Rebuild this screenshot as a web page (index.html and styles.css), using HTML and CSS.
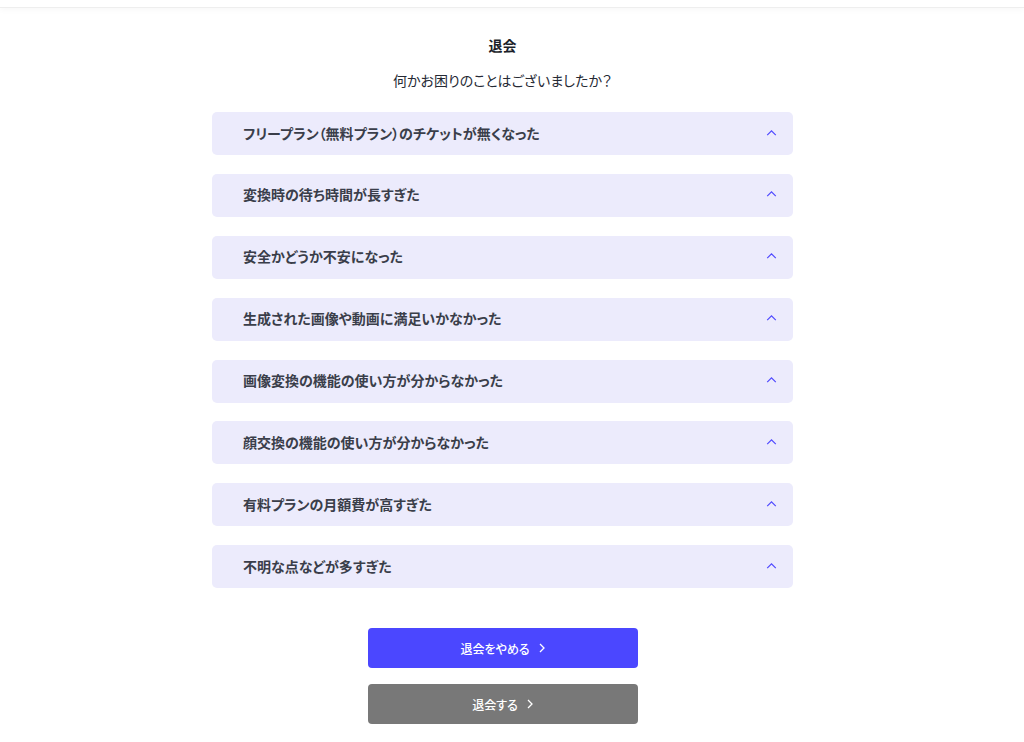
FILE: index.html
```html
<!DOCTYPE html>
<html lang="ja">
<head>
<meta charset="utf-8">
<title>退会</title>
<link rel="stylesheet" href="styles.css">
</head>
<body>
<header class="topbar"></header>
<main class="page">
  <h1 class="title">退会</h1>
  <p class="lead">何かお困りのことはございましたか？</p>
  <ul class="reasons">
    <li class="reason"><span>フリープラン（無料プラン）のチケットが無くなった</span><svg class="chev" viewBox="0 0 12 7"><path d="M1 6L6 1l5 5"/></svg></li>
    <li class="reason"><span>変換時の待ち時間が長すぎた</span><svg class="chev" viewBox="0 0 12 7"><path d="M1 6L6 1l5 5"/></svg></li>
    <li class="reason"><span>安全かどうか不安になった</span><svg class="chev" viewBox="0 0 12 7"><path d="M1 6L6 1l5 5"/></svg></li>
    <li class="reason"><span>生成された画像や動画に満足いかなかった</span><svg class="chev" viewBox="0 0 12 7"><path d="M1 6L6 1l5 5"/></svg></li>
    <li class="reason"><span>画像変換の機能の使い方が分からなかった</span><svg class="chev" viewBox="0 0 12 7"><path d="M1 6L6 1l5 5"/></svg></li>
    <li class="reason"><span>顔交換の機能の使い方が分からなかった</span><svg class="chev" viewBox="0 0 12 7"><path d="M1 6L6 1l5 5"/></svg></li>
    <li class="reason"><span>有料プランの月額費が高すぎた</span><svg class="chev" viewBox="0 0 12 7"><path d="M1 6L6 1l5 5"/></svg></li>
    <li class="reason"><span>不明な点などが多すぎた</span><svg class="chev" viewBox="0 0 12 7"><path d="M1 6L6 1l5 5"/></svg></li>
  </ul>
  <div class="actions">
    <button class="btn btn-primary">退会をやめる<svg class="arrow" viewBox="0 0 6 10"><path d="M1 1l4 4-4 4"/></svg></button>
    <button class="btn btn-gray">退会する<svg class="arrow" viewBox="0 0 6 10"><path d="M1 1l4 4-4 4"/></svg></button>
  </div>
</main>
</body>
</html>
```
FILE: styles.css
```css
html, body {
  margin: 0;
  padding: 0;
  background: #ffffff;
}
body {
  font-family: "Noto Sans CJK JP", "Noto Sans", sans-serif;
  font-feature-settings: "palt";
  color: #1f2330;
  padding-right: 19px;
}
.topbar {
  height: 7px;
  margin-right: -19px;
  background: #fff;
  border-bottom: 1px solid #eeeeee;
  box-shadow: 0 2px 6px rgba(0,0,0,0.03);
}
.page {
  width: 581px;
  margin: 0 auto;
  padding-top: 27px;
  display: flex;
  flex-direction: column;
  align-items: stretch;
}
.title {
  margin: 0;
  font-size: 14px;
  line-height: 20px;
  font-weight: 700;
  text-align: center;
  color: #1c1f2a;
}
.lead {
  margin: 15px 0 0;
  font-size: 14px;
  line-height: 20px;
  text-align: center;
  color: #262a35;
}
.reasons {
  list-style: none;
  margin: 22px 0 0;
  padding: 0;
  display: flex;
  flex-direction: column;
  gap: 18.9px;
}
.reason {
  height: 43px;
  box-sizing: border-box;
  background: #ecebfc;
  border-radius: 5px;
  display: flex;
  align-items: center;
  justify-content: space-between;
  padding: 0 16px 2px 31px;
  font-size: 14px;
  font-weight: 700;
  color: #3a3e4a;
}
.chev {
  width: 11px;
  height: 6px;
  fill: none;
  stroke: #4f49ff;
  stroke-width: 1.4;
}
.actions {
  margin-top: 40px;
  display: flex;
  flex-direction: column;
  align-items: center;
  gap: 16px;
}
.btn {
  width: 270px;
  height: 40px;
  border: none;
  border-radius: 4px;
  font-family: inherit;
  font-feature-settings: "palt";
  font-size: 12px;
  font-weight: 500;
  color: #fff;
  display: flex;
  align-items: center;
  justify-content: center;
  gap: 9px;
  cursor: pointer;
}
.btn-primary {
  background: #4b47ff;
}
.btn-gray {
  background: #787878;
}
.arrow {
  width: 6px;
  height: 10px;
  fill: none;
  stroke: #fff;
  stroke-width: 1.3;
}
```
